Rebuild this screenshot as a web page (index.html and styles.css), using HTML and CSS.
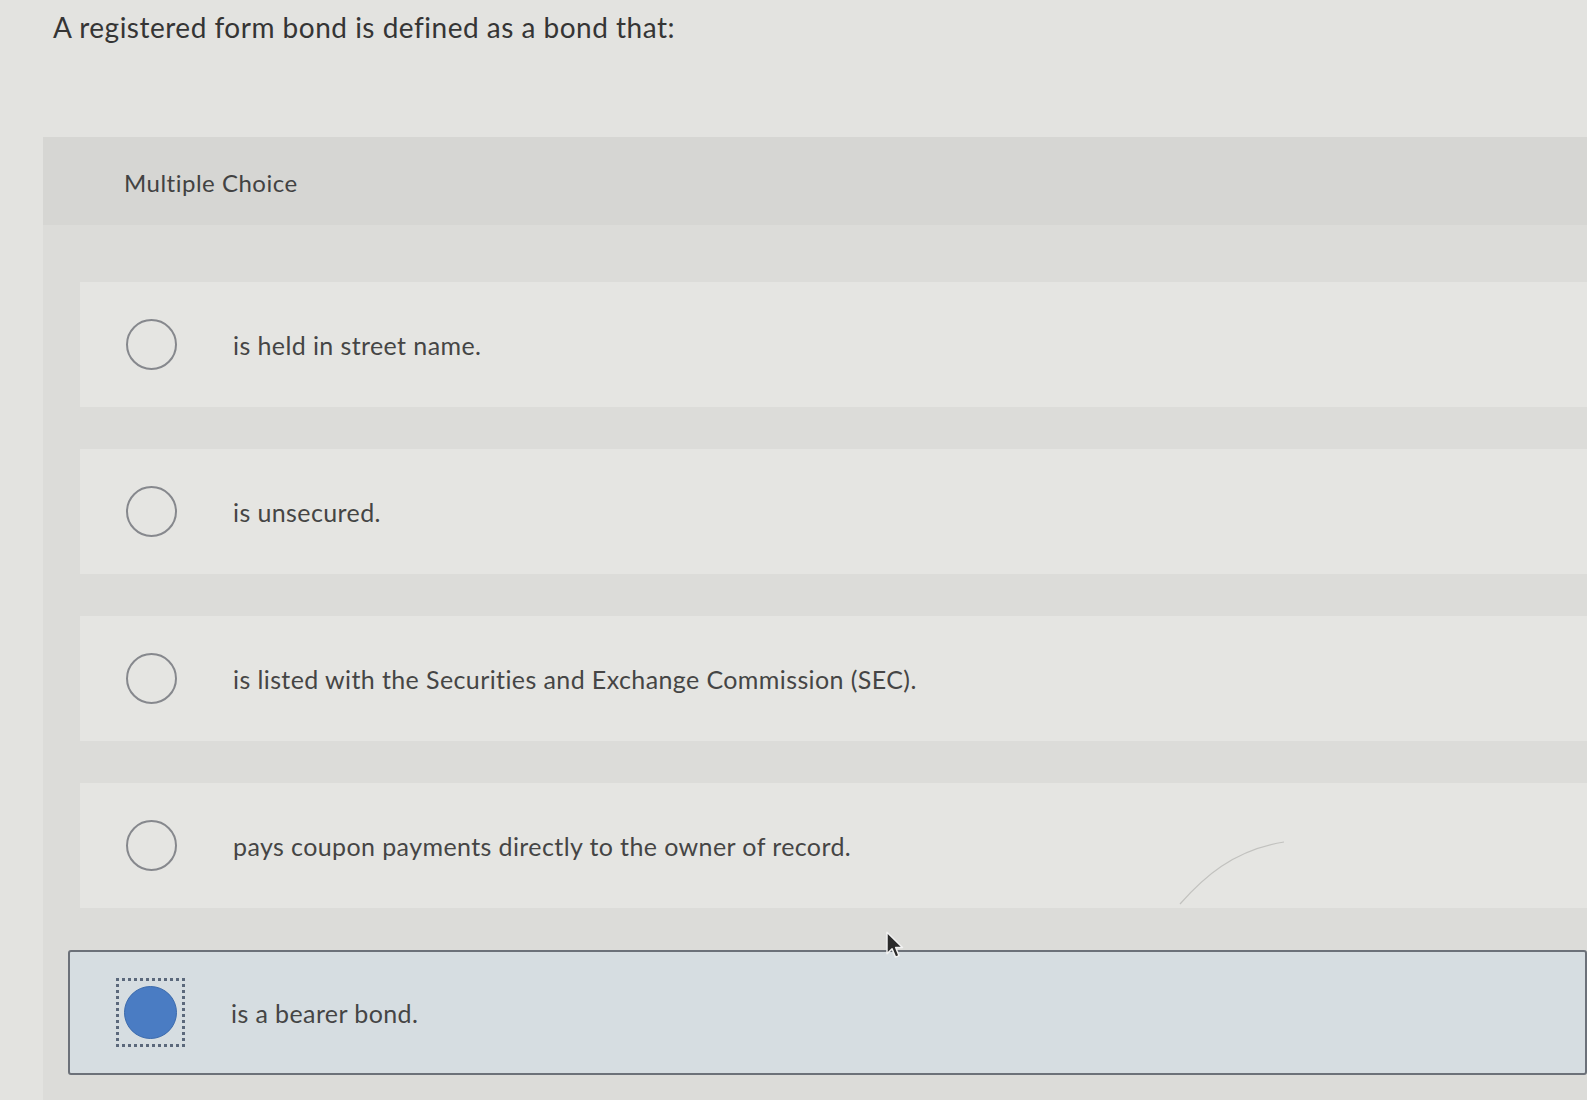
FILE: index.html
```html
<!DOCTYPE html>
<html lang="en">
<head>
<meta charset="utf-8">
<title>Multiple Choice</title>
<link rel="stylesheet" href="styles.css">
</head>
<body>
<div class="page">
  <h1 class="question">A registered form bond is defined as a bond that:</h1>
  <section class="panel">
    <div class="panel-head">Multiple Choice</div>
    <div class="choices">
      <div class="choice"><span class="radio"></span><span class="label">is held in street name.</span></div>
      <div class="choice"><span class="radio"></span><span class="label">is unsecured.</span></div>
      <div class="choice"><span class="radio"></span><span class="label">is listed with the Securities and Exchange Commission (SEC).</span></div>
      <div class="choice"><span class="radio"></span><span class="label">pays coupon payments directly to the owner of record.</span></div>
      <div class="choice selected"><span class="focus"><span class="radio filled"></span></span><span class="label">is a bearer bond.</span></div>
    </div>
  </section>
  <svg class="scratch" width="110" height="70" viewBox="0 0 110 70"><path d="M2 66 C 25 40, 55 12, 106 4" fill="none" stroke="#c2c2bf" stroke-width="1.2"/></svg>
  <svg class="cursor" width="20" height="28" viewBox="0 0 14 21"><path d="M1 1 L1 17 L4.8 13.4 L7.4 19.6 L10 18.5 L7.5 12.4 L12.6 12.4 Z" fill="#2a2a2a" stroke="#f2f2f2" stroke-width="1.1" stroke-linejoin="round"/></svg>
</div>
</body>
</html>
```

FILE: styles.css
```css
html, body {
  margin: 0;
  padding: 0;
}
body {
  background: #e3e3e0;
  font-family: Lato, "Open Sans", Arial, sans-serif;
  overflow: hidden;
}
.page {
  position: relative;
  height: 1100px;
  overflow: hidden;
}
.question {
  margin: 0;
  padding: 11px 0 0 53px;
  font-size: 28px;
  letter-spacing: 0.5px;
  line-height: 32px;
  font-weight: 400;
  color: #353535;
}
.panel {
  margin: 94px 0 0 43px;
  background: #dcdcd9;
  padding-bottom: 60px;
}
.panel-head {
  height: 88px;
  box-sizing: border-box;
  padding: 2px 0 0 81px;
  display: flex;
  align-items: center;
  background: #d6d6d3;
  font-size: 24px;
  letter-spacing: 0.5px;
  color: #424242;
}
.choices {
  display: flex;
  flex-direction: column;
  gap: 42px;
  padding: 57px 0 0 37px;
}
.choice {
  height: 125px;
  box-sizing: border-box;
  display: flex;
  align-items: center;
  padding-left: 46px;
  background: #e5e5e2;
  font-size: 25px;
  letter-spacing: 0.4px;
  color: #454545;
}
.radio {
  flex: none;
  width: 51px;
  height: 51px;
  box-sizing: border-box;
  border-radius: 50%;
  border: 2.5px solid #86888d;
}
.label {
  margin-left: 56px;
}
.choice.selected {
  margin-left: -12px;
  padding-left: 46px;
  border: 2px solid #6c7179;
  border-radius: 3px;
  background: #d6dde1;
}
.focus {
  flex: none;
  display: flex;
  padding: 5px;
  border: 3px dotted #5b687b;
}
.radio.filled {
  width: 53px;
  height: 53px;
  background: #4a7cc3;
  border: 1.5px solid #3b6aac;
}
.selected .label {
  margin-left: 46px;
}
.scratch {
  position: absolute;
  left: 1178px;
  top: 838px;
}
.cursor {
  position: absolute;
  left: 885px;
  top: 931px;
}
```
